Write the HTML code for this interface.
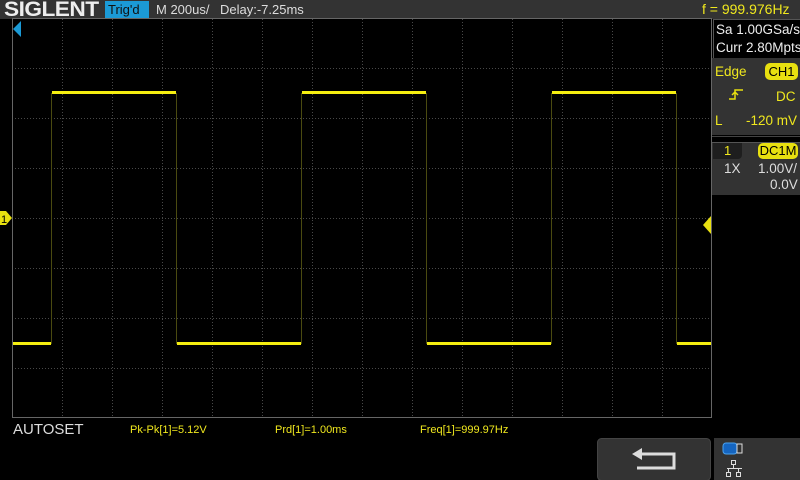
<!DOCTYPE html>
<html><head><style>
*{margin:0;padding:0;box-sizing:border-box}
body{width:800px;height:480px;background:#000;overflow:hidden;position:relative;font-family:"Liberation Sans",sans-serif;color:#ddd}
.a{position:absolute;white-space:nowrap}
.y{color:#f0e81e}
</style></head><body>
<div class="a" style="left:0;top:0;width:800px;height:19px;background:#333"></div>
<div class="a" style="left:4px;top:-2px;font-size:21px;font-weight:bold;color:#eee;letter-spacing:-0.5px;transform:scaleX(1.08);transform-origin:left">SIGLENT</div>
<div class="a" style="left:105px;top:1px;width:44px;height:17px;background:#1b9ad6;color:#111;font-size:13px;padding-left:3px;line-height:17px">Trig'd</div>
<div class="a" style="left:156px;top:1px;font-size:13px;line-height:17px">M 200us/</div>
<div class="a" style="left:220px;top:1px;font-size:13px;line-height:17px">Delay:-7.25ms</div>
<div class="a y" style="left:702px;top:0px;font-size:14px;line-height:18px">f = 999.976Hz</div>

<svg class="a" style="left:0;top:0" width="800" height="480">
<g stroke="#484848" stroke-width="1" stroke-dasharray="1,2">
<line x1="62.5" y1="19" x2="62.5" y2="418"/><line x1="112.5" y1="19" x2="112.5" y2="418"/><line x1="162.5" y1="19" x2="162.5" y2="418"/><line x1="212.5" y1="19" x2="212.5" y2="418"/><line x1="262.5" y1="19" x2="262.5" y2="418"/><line x1="312.5" y1="19" x2="312.5" y2="418"/><line x1="412.5" y1="19" x2="412.5" y2="418"/><line x1="462.5" y1="19" x2="462.5" y2="418"/><line x1="512.5" y1="19" x2="512.5" y2="418"/><line x1="562.5" y1="19" x2="562.5" y2="418"/><line x1="612.5" y1="19" x2="612.5" y2="418"/><line x1="662.5" y1="19" x2="662.5" y2="418"/>
<line x1="362.5" y1="19" x2="362.5" y2="418"/>
<line x1="12" y1="68.5" x2="712" y2="68.5"/><line x1="12" y1="118.5" x2="712" y2="118.5"/><line x1="12" y1="168.5" x2="712" y2="168.5"/><line x1="12" y1="268.5" x2="712" y2="268.5"/><line x1="12" y1="318.5" x2="712" y2="318.5"/><line x1="12" y1="368.5" x2="712" y2="368.5"/>
<line x1="12" y1="218.5" x2="712" y2="218.5"/>
</g>
<rect x="12.5" y="18.5" width="699" height="399" fill="none" stroke="#666"/>
<g stroke="#4a4a10" stroke-width="1">
<line x1="51.5" y1="93" x2="51.5" y2="344"/><line x1="176.5" y1="93" x2="176.5" y2="344"/><line x1="301.5" y1="93" x2="301.5" y2="344"/><line x1="426.5" y1="93" x2="426.5" y2="344"/><line x1="551.5" y1="93" x2="551.5" y2="344"/><line x1="676.5" y1="93" x2="676.5" y2="344"/>
</g>
<g stroke="#f5ee10" stroke-width="3">
<line x1="13" y1="343.5" x2="51" y2="343.5"/><line x1="52" y1="92.5" x2="176" y2="92.5"/><line x1="177" y1="343.5" x2="301" y2="343.5"/><line x1="302" y1="92.5" x2="426" y2="92.5"/><line x1="427" y1="343.5" x2="551" y2="343.5"/><line x1="552" y1="92.5" x2="676" y2="92.5"/><line x1="677" y1="343.5" x2="711" y2="343.5"/>
</g>
<polygon points="13,29 21,21 21,37" fill="#1b9ad6"/>
<polygon points="0,211 6,211 12,218 6,225 0,225" fill="#e8e010"/>
<text x="1" y="223" font-size="11" fill="#000" font-family="Liberation Sans">1</text>
<polygon points="703,225 711,216 711,234" fill="#e8e010"/>
<rect x="597.5" y="438.5" width="113" height="42" rx="4" fill="#333" stroke="#444"/>
<path d="M636 454 H674 V468 H637" fill="none" stroke="#ddd" stroke-width="3"/>
<polygon points="632,454 642,448 642,460" fill="#ddd"/>
<rect x="714" y="438" width="86" height="42" fill="#333"/>
<rect x="723" y="443" width="14" height="11" rx="3" fill="#1565c0" stroke="#4aa3f0"/>
<rect x="737" y="444" width="5" height="9" fill="none" stroke="#ddd"/>
<g fill="none" stroke="#ddd"><rect x="731.5" y="460.5" width="4" height="4"/><line x1="733.5" y1="465" x2="733.5" y2="468"/><line x1="727" y1="468.5" x2="742" y2="468.5"/><line x1="728.5" y1="468" x2="728.5" y2="472"/><line x1="738.5" y1="468" x2="738.5" y2="472"/><rect x="726.5" y="472.5" width="4" height="4"/><rect x="736.5" y="472.5" width="4" height="4"/></g>
</svg>

<div class="a" style="left:713px;top:19px;width:87px;height:39px;border-left:1px solid #555;border-top:1px solid #555"></div>
<div class="a" style="left:716px;top:21px;font-size:13.5px;line-height:17px;color:#eee">Sa 1.00GSa/s</div>
<div class="a" style="left:716px;top:39px;font-size:13.5px;line-height:17px;color:#eee">Curr 2.80Mpts</div>
<div class="a" style="left:712px;top:58px;width:88px;height:77px;background:#333"></div>
<div class="a y" style="left:715px;top:63px;font-size:13.5px;line-height:17px">Edge</div>
<div class="a" style="left:765px;top:63px;width:33px;height:17px;background:#e8e010;border-radius:5px;color:#000;font-size:13px;line-height:17px;text-align:center">CH1</div>
<svg class="a" style="left:728px;top:87px" width="16" height="14"><path d="M1 12 H7 V3 H15 M4 8 L7 5 L10 8" fill="none" stroke="#e8e010" stroke-width="1.5"/></svg>
<div class="a y" style="left:776px;top:88px;font-size:13.5px;line-height:17px">DC</div>
<div class="a y" style="left:715px;top:112px;font-size:13.5px;line-height:17px">L</div>
<div class="a y" style="left:746px;top:112px;font-size:13.5px;line-height:17px">-120 mV</div>
<div class="a" style="left:712px;top:136px;width:88px;height:1px;background:#444"></div>
<div class="a" style="left:712px;top:142px;width:88px;height:53px;background:#333;border-top:1px solid #555"></div>
<div class="a" style="left:713px;top:143px;width:29px;height:16px;background:#1e1e1e;border-radius:0 0 4px 0"></div>
<div class="a y" style="left:724px;top:143px;font-size:13px;line-height:16px">1</div>
<div class="a" style="left:758px;top:143px;width:40px;height:16px;background:#e8e010;border-radius:5px;color:#000;font-size:13px;line-height:16px;text-align:center">DC1M</div>
<div class="a" style="left:724px;top:161px;font-size:13.5px;line-height:16px">1X</div>
<div class="a" style="left:758px;top:161px;font-size:13.5px;line-height:16px">1.00V/</div>
<div class="a" style="left:770px;top:177px;font-size:13.5px;line-height:16px">0.0V</div>

<div class="a" style="left:13px;top:421px;font-size:15px;line-height:18px;color:#ddd">AUTOSET</div>
<div class="a y" style="left:130px;top:423px;font-size:11px;line-height:14px">Pk-Pk[1]=5.12V</div>
<div class="a y" style="left:275px;top:423px;font-size:11px;line-height:14px">Prd[1]=1.00ms</div>
<div class="a y" style="left:420px;top:423px;font-size:11px;line-height:14px">Freq[1]=999.97Hz</div>
</body></html>
